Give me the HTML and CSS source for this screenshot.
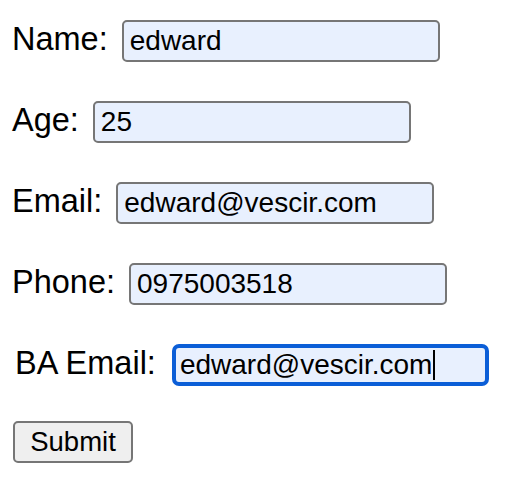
FILE: index.html
```html
<!DOCTYPE html>
<html>
<head>
<meta charset="utf-8">
<link rel="stylesheet" href="styles.css">
</head>
<body>
<form class="form">
  <div class="row"><label class="label">Name:</label><input class="field" type="text" value="edward"></div>
  <div class="row"><label class="label">Age:</label><input class="field" type="text" value="25"></div>
  <div class="row"><label class="label">Email:</label><input class="field" type="text" value="edward@vescir.com"></div>
  <div class="row"><label class="label">Phone:</label><input class="field" type="text" value="0975003518"></div>
  <div class="row"><label class="label label-wide">BA Email:</label><div class="field field-focus">edward@vescir.com<span class="caret"></span></div></div>
  <div class="row row-submit"><button class="submit" type="button">Submit</button></div>
</form>
</body>
</html>
```

FILE: styles.css
```css
html, body {
  margin: 0;
  padding: 0;
  background: #ffffff;
}
body {
  font-family: "Liberation Sans", Arial, sans-serif;
  color: #000;
}
.form {
  display: flex;
  flex-direction: column;
  gap: 39px;
  padding: 20px 0 0 12px;
}
.row {
  display: flex;
  align-items: baseline;
  gap: 14px;
}
.label {
  font-size: 32.5px;
}
.label-wide {
  margin-left: 3px;
  margin-right: 2px;
}
.field {
  box-sizing: border-box;
  width: 318px;
  height: 42px;
  margin: 0;
  padding: 0 6px;
  font-family: "Liberation Sans", Arial, sans-serif;
  font-size: 28px;
  color: #000;
  background: #e8f0fe;
  border: 2px solid #767676;
  border-radius: 5px;
  outline: none;
  display: flex;
  align-items: center;
}
.field-focus {
  width: 317px;
  border: 4px solid #0b5ed7;
  border-radius: 7px;
  padding: 0 4px;
  line-height: 1;
}
.caret {
  display: inline-block;
  width: 2px;
  height: 30px;
  background: #000;
  margin-left: 1px;
}
.row-submit {
  margin-top: -4px;
  padding-left: 1px;
}
.submit {
  box-sizing: border-box;
  width: 120px;
  height: 42px;
  font-family: "Liberation Sans", Arial, sans-serif;
  font-size: 27.5px;
  color: #000;
  background: #efefef;
  border: 2px solid #767676;
  border-radius: 5px;
  padding: 0;
}
```
